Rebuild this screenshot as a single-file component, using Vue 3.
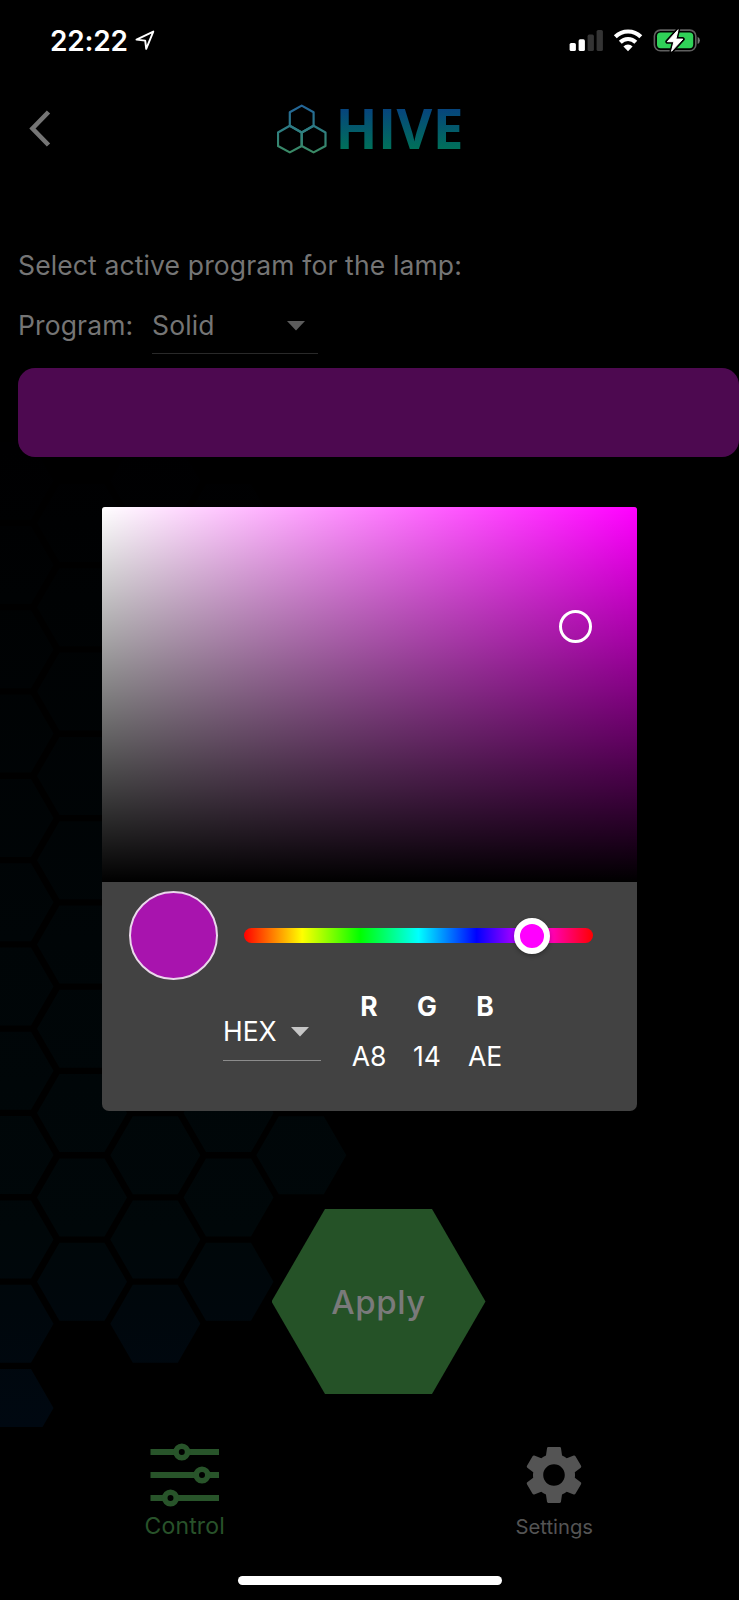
<script setup>
const PITCH = 84.3
const columns = [
  { x: 8.5, last: 1408, count: 12 },
  { x: 82, last: 1281.7, count: 10 },
  { x: 155.3, last: 1323.8, count: 11 },
  { x: 228.5, last: 1281.7, count: 10 },
  { x: 301.3, last: 1155.3, count: 4 },
]

function hexagon(cx, cy, r) {
  return [0, 60, 120, 180, 240, 300]
    .map((deg) => {
      const a = (deg * Math.PI) / 180
      return `${(cx + r * Math.cos(a)).toFixed(1)},${(cy + r * Math.sin(a)).toFixed(1)}`
    })
    .join(' ')
}

const cells = columns.flatMap((col) =>
  Array.from({ length: col.count }, (_, i) => hexagon(col.x, col.last - i * PITCH, 45)),
)

const channels = [
  { name: 'R', value: 'A8' },
  { name: 'G', value: '14' },
  { name: 'B', value: 'AE' },
]
</script>

<template>
  <div class="screen">
    <svg class="honeycomb" width="739" height="1427" viewBox="0 0 739 1427">
      <defs>
        <linearGradient id="comb" gradientUnits="userSpaceOnUse" x1="0" y1="450" x2="0" y2="1427">
          <stop offset="0" stop-color="#000001" />
          <stop offset="0.15" stop-color="#000203" />
          <stop offset="0.5" stop-color="#000507" />
          <stop offset="0.8" stop-color="#000709" />
          <stop offset="0.88" stop-color="#00070c" />
          <stop offset="1" stop-color="#000811" />
        </linearGradient>
      </defs>
      <polygon v-for="(points, i) in cells" :key="i" :points="points" fill="url(#comb)" />
    </svg>

    <header class="status">
      <span class="clock">22:22</span>
      <svg class="location" width="20" height="21" viewBox="0 0 20 21">
        <path d="M1.5 9.6 18.3 1.6 11.2 18.8 10.2 10.6Z" fill="none" stroke="#fff" stroke-width="1.9" stroke-linejoin="round" />
      </svg>
      <svg class="indicators" width="134" height="24" viewBox="0 0 134 24">
        <g fill="#fff">
          <rect x="0.6" y="14" width="6.3" height="8" rx="1.6" />
          <rect x="9.6" y="10.3" width="6.3" height="11.7" rx="1.6" />
        </g>
        <g fill="#343434">
          <rect x="18.6" y="5.6" width="6.3" height="16.4" rx="1.6" />
          <rect x="27.6" y="1" width="6.3" height="21" rx="1.6" />
        </g>
        <g fill="none" stroke="#fff" stroke-width="4.1">
          <path d="M46.3 7.8a18 18 0 0 1 25.5 0" />
          <path d="M51.3 13.2a11 11 0 0 1 15.5 0" />
        </g>
        <path d="M54.4 17.5a6.4 6.4 0 0 1 9.2 0L59 22.2Z" fill="#fff" />
        <rect x="85.4" y="1.1" width="41.4" height="20.6" rx="6" fill="none" stroke="#5f5f5f" stroke-width="1.6" />
        <path d="M128.6 7.8a4 4 0 0 1 0 7.2Z" fill="#777" />
        <rect x="88" y="3.6" width="36.2" height="15.6" rx="3.6" fill="#30d158" />
        <path d="M109.1.7 98.3 12.7h6.6l-2.4 9.6 11.3-12.2h-6.9Z" fill="#fff" stroke="#000" stroke-width="4" stroke-linejoin="round" />
        <path d="M109.1.7 98.3 12.7h6.6l-2.4 9.6 11.3-12.2h-6.9Z" fill="#fff" stroke="#fff" stroke-width="1" stroke-linejoin="round" />
      </svg>
    </header>

    <div class="topbar">
      <svg class="back" width="24" height="38" viewBox="0 0 24 38">
        <path d="M20.5 2 4.5 18.5 20.5 35" fill="none" stroke="#757575" stroke-width="4.6" />
      </svg>
      <div class="brand">
        <svg width="50" height="50" viewBox="0 0 50 50">
          <defs>
            <linearGradient id="logo" gradientUnits="userSpaceOnUse" x1="0" y1="0" x2="0" y2="50">
              <stop offset="0" stop-color="#22639a" />
              <stop offset="0.55" stop-color="#2f7f80" />
              <stop offset="1" stop-color="#3b8b63" />
            </linearGradient>
          </defs>
          <g fill="none" stroke="url(#logo)" stroke-width="2.2" stroke-linejoin="round">
            <path d="M24.7 1.6 36.6 8.3V21.8L24.7 28.5 12.8 21.8V8.3Z" />
            <path d="M12.8 21.8 24.7 28.5V42L12.8 48.4 1 42V28.5Z" />
            <path d="M36.6 21.8 48.5 28.5V42L36.6 48.4 24.7 42V28.5Z" />
          </g>
        </svg>
        <span class="wordmark">HIVE</span>
      </div>
    </div>

    <main class="content">
      <p class="prompt">Select active program for the lamp:</p>
      <div class="program">
        <span class="label">Program:</span>
        <div class="select wide">
          <span>Solid</span>
          <svg width="18" height="10" viewBox="0 0 18 10"><path d="M0 0H18L9 9.5Z" fill="#5c5c5c" /></svg>
        </div>
      </div>
      <div class="colorbar"></div>
      <button class="apply">Apply</button>
    </main>

    <nav class="tabs">
      <div class="tab active">
        <svg width="70" height="66" viewBox="0 0 70 66">
          <g fill="#28542a">
            <rect x="0.5" y="7" width="68.5" height="6" />
            <rect x="0.5" y="30" width="68.5" height="6" />
            <rect x="0.5" y="53" width="68.5" height="6" />
          </g>
          <g fill="#000" stroke="#28542a" stroke-width="5.6">
            <circle cx="31.8" cy="10" r="5.8" />
            <circle cx="52" cy="33" r="5.8" />
            <circle cx="20.5" cy="56" r="5.8" />
          </g>
        </svg>
        <span>Control</span>
      </div>
      <div class="tab">
        <svg width="70" height="70" viewBox="0 0 24 24">
          <path fill="#545454" d="M19.14 12.94c.04-.3.06-.61.06-.94 0-.32-.02-.64-.07-.94l2.03-1.58c.18-.14.23-.41.12-.61l-1.92-3.32c-.12-.22-.37-.29-.59-.22l-2.39.96c-.5-.38-1.03-.7-1.62-.94l-.36-2.54c-.04-.24-.24-.41-.48-.41h-3.84c-.24 0-.43.17-.47.41l-.36 2.54c-.59.24-1.13.57-1.62.94l-2.39-.96c-.22-.08-.47 0-.59.22L2.74 8.87c-.12.21-.08.47.12.61l2.03 1.58c-.05.3-.09.63-.09.94s.02.64.07.94l-2.03 1.58c-.18.14-.23.41-.12.61l1.92 3.32c.12.22.37.29.59.22l2.39-.96c.5.38 1.03.7 1.62.94l.36 2.54c.05.24.24.41.48.41h3.84c.24 0 .44-.17.47-.41l.36-2.54c.59-.24 1.13-.56 1.62-.94l2.39.96c.22.08.47 0 .59-.22l1.92-3.32c.12-.22.07-.47-.12-.61l-2.01-1.58zM12 15.7c-2.04 0-3.7-1.66-3.7-3.7s1.66-3.7 3.7-3.7 3.7 1.66 3.7 3.7-1.66 3.7-3.7 3.7z" />
        </svg>
        <span>Settings</span>
      </div>
    </nav>
    <div class="home"></div>

    <div class="overlay">
      <section class="picker">
        <div class="field"><i class="ring"></i></div>
        <div class="hue-row">
          <div class="swatch"></div>
          <div class="hue"><i class="thumb"></i></div>
        </div>
        <div class="values">
          <div class="select mode">
            <span>HEX</span>
            <svg width="18" height="10" viewBox="0 0 18 10"><path d="M0 0H18L9 9.5Z" fill="#c6c6c6" /></svg>
          </div>
          <div v-for="c in channels" :key="c.name" class="channel">
            <b>{{ c.name }}</b>
            <span>{{ c.value }}</span>
          </div>
        </div>
      </section>
    </div>
  </div>
</template>

<style>
html,
body {
  margin: 0;
  background: #000;
}
</style>

<style scoped>
.screen {
  position: relative;
  display: flex;
  flex-direction: column;
  width: 739px;
  height: 1600px;
  overflow: hidden;
  background: #000;
  color: #757575;
  font-family: Inter, "Liberation Sans", sans-serif;
  font-size: 26.5px;
}
.screen * {
  box-sizing: border-box;
}
svg {
  display: block;
  flex: none;
}
.honeycomb {
  position: absolute;
  left: 0;
  top: 0;
}
.status {
  position: relative;
  display: flex;
  height: 80px;
  padding: 29px 36px 0 50px;
  color: #fff;
}
.clock {
  width: 84.5px;
  font-size: 28px;
  font-weight: 600;
  line-height: 24px;
  letter-spacing: -0.2px;
  white-space: nowrap;
}
.location {
  margin-top: 1px;
}
.indicators {
  margin-left: auto;
}
.topbar {
  position: relative;
  display: flex;
  align-items: center;
  height: 98px;
}
.back {
  margin-left: 27.5px;
}
.brand {
  display: flex;
  align-items: center;
  gap: 9.5px;
  margin-left: 225.5px;
  height: 52px;
}
.wordmark {
  margin: -2px 0 0 -1px;
  font-family: "Open Sans", sans-serif;
  font-size: 55px;
  font-weight: 700;
  line-height: 60px;
  letter-spacing: 0.4px;
  background: linear-gradient(#06457c 12px, #006f5a 50px);
  background-clip: text;
  color: transparent;
}
.content {
  position: relative;
  display: flex;
  flex-direction: column;
  height: 1249px;
  padding: 69px 0 0 18px;
  letter-spacing: 0.13px;
}
.prompt {
  margin: 0;
  height: 37px;
  line-height: 36px;
  white-space: nowrap;
}
.program {
  display: flex;
  height: 84px;
  padding-top: 20px;
}
.label {
  width: 134px;
  line-height: 42px;
  padding-top: 0;
}
.select {
  display: flex;
  justify-content: space-between;
  align-items: center;
}
.select svg {
  margin-top: 3px;
}
.wide {
  width: 165.5px;
  height: 50px;
  padding: 0 12.5px 8px 0;
  border-bottom: 1.5px solid #292929;
}
.colorbar {
  height: 89px;
  border-radius: 17px;
  background: #4d0950;
}
.apply {
  width: 214px;
  height: 185px;
  margin: 752px 0 0 253.5px;
  padding: 2px 0 0;
  border: 0;
  clip-path: polygon(25% 0, 75% 0, 100% 50%, 75% 100%, 25% 100%, 0 50%);
  background: #255227;
  color: #7a7a7a;
  font: 500 33px/183px Inter, sans-serif;
  letter-spacing: 0.6px;
  text-align: center;
}
.tabs {
  position: relative;
  display: flex;
  height: 149px;
}
.tab {
  flex: 1;
  display: flex;
  flex-direction: column;
  align-items: center;
  padding-top: 12.5px;
  font-size: 20.3px;
  line-height: 28px;
  color: #545454;
}
.tab span {
  margin-top: 3.5px;
}
.active {
  padding-top: 15px;
  color: #28522a;
  font-size: 23px;
  letter-spacing: 0.15px;
}
.home {
  position: relative;
  width: 264px;
  height: 9px;
  margin-left: 237.5px;
  border-radius: 5px;
  background: #fff;
  flex: none;
}
.overlay {
  position: absolute;
  inset: 0;
  padding: 507px 102px 0;
}
.picker {
  width: 535px;
  height: 603.5px;
  overflow: hidden;
  border-radius: 3px 3px 7px 7px;
  background: #424242;
  color: #fff;
}
.field {
  position: relative;
  height: 375px;
  background: linear-gradient(transparent, #000), linear-gradient(90deg, #fff, #f0f);
}
.ring {
  position: absolute;
  left: 456.5px;
  top: 103px;
  width: 33px;
  height: 33px;
  border: 3px solid #fff;
  border-radius: 50%;
}
.hue-row {
  display: flex;
  align-items: center;
  gap: 26.5px;
  height: 107px;
  padding: 0 44.5px 0 26.5px;
}
.swatch {
  width: 89px;
  height: 89px;
  border: 2px solid #ead7eb;
  border-radius: 50%;
  background: #a814ae;
}
.hue {
  position: relative;
  flex: 1;
  height: 15px;
  border-radius: 8px;
  background: linear-gradient(90deg, #f00, #ff0 16.67%, #0f0 33.33%, #0ff 50%, #00f 66.67%, #f0f 83.33%, #f00);
}
.thumb {
  position: absolute;
  left: 270.3px;
  top: -10.5px;
  width: 36px;
  height: 36px;
  border: 6px solid #fff;
  border-radius: 50%;
  background: #f0f;
  box-shadow: 0 2px 4px rgba(0, 0, 0, 0.3);
}
.values {
  display: flex;
  padding-left: 121px;
}
.mode {
  width: 98px;
  height: 51px;
  margin: 21px 19px 0 0;
  padding: 0 12px 9px 0;
  border-bottom: 1.5px solid #8c8c8c;
}
.channel {
  display: flex;
  flex-direction: column;
  align-items: center;
  gap: 16px;
  width: 58px;
  line-height: 34px;
}
.channel b {
  font-weight: 700;
}
</style>
